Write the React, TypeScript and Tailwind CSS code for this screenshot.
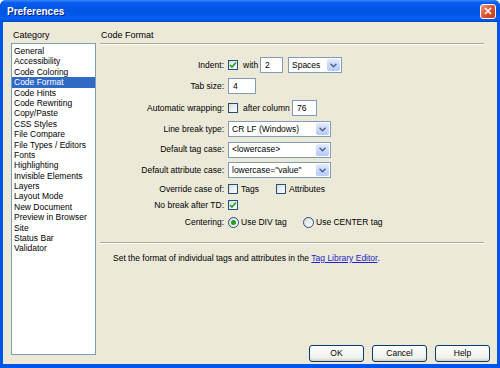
import React from "react";

const categories = [
  "General",
  "Accessibility",
  "Code Coloring",
  "Code Format",
  "Code Hints",
  "Code Rewriting",
  "Copy/Paste",
  "CSS Styles",
  "File Compare",
  "File Types / Editors",
  "Fonts",
  "Highlighting",
  "Invisible Elements",
  "Layers",
  "Layout Mode",
  "New Document",
  "Preview in Browser",
  "Site",
  "Status Bar",
  "Validator",
];

function Check({ on }: { on?: boolean }) {
  return (
    <span className="flex h-[10px] w-[10px] shrink-0 items-center justify-center border border-[#1C5180] bg-[linear-gradient(135deg,#DCDCD7,#FFFFFF)]">
      {on && (
        <svg width="8" height="8" viewBox="0 0 8 8">
          <path d="M1 4 L3 6 L7 1.5" fill="none" stroke="#21A121" strokeWidth="1.6" />
        </svg>
      )}
    </span>
  );
}

function Radio({ on }: { on?: boolean }) {
  return (
    <span className="flex h-[11px] w-[11px] shrink-0 items-center justify-center rounded-full border border-[#1C5180] bg-[linear-gradient(135deg,#DCDCD7,#FFFFFF)]">
      {on && <span className="h-[5px] w-[5px] rounded-full bg-[#21A121]" />}
    </span>
  );
}

function Field({ value, w }: { value: string; w: string }) {
  return (
    <span className={`flex h-[16px] items-center border border-[#7F9DB9] bg-white pl-[4px] ${w}`}>{value}</span>
  );
}

function Select({ value, w }: { value: string; w: string }) {
  return (
    <span className={`flex h-[16px] items-center border border-[#7F9DB9] bg-white pl-[3px] ${w}`}>
      <span className="flex-1 whitespace-nowrap">{value}</span>
      <span className="m-px flex h-[12px] w-[13px] items-center justify-center rounded-[2px] bg-[linear-gradient(180deg,#E2EBFE,#B6CAF9)]">
        <svg width="7" height="5" viewBox="0 0 7 5">
          <path d="M0.5 0.8 L3.5 3.8 L6.5 0.8" fill="none" stroke="#4D6185" strokeWidth="1.5" />
        </svg>
      </span>
    </span>
  );
}

function Row({ label, h, children }: { label: string; h: string; children: React.ReactNode }) {
  return (
    <div className={`grid grid-cols-[124px_1fr] items-center gap-x-[4px] ${h}`}>
      <span className="text-right whitespace-nowrap">{label}</span>
      <div className="flex items-center">{children}</div>
    </div>
  );
}

function Button({ label }: { label: string }) {
  return (
    <button className="flex h-[17px] w-[55px] items-center justify-center rounded-[3px] border border-[#003C74] bg-[linear-gradient(180deg,#FFFFFF,#F0F0EA_80%,#D6D0C5)] text-black">
      {label}
    </button>
  );
}

export default function App() {
  return (
    <div className="flex h-[368px] w-[500px] flex-col overflow-hidden rounded-t-[6px] bg-[#0055EA] font-['Liberation_Sans',Arial,sans-serif] text-[8.5px] text-black">
      <div className="flex h-[22px] items-center justify-between bg-[linear-gradient(180deg,#3A8CFF_0%,#0A5DF0_12%,#0054E3_50%,#0061F5_85%,#0046C8_100%)] pl-[7px] pr-[4px]">
        <span className="text-[10px] font-bold text-white [text-shadow:1px_1px_#0A1E80]">Preferences</span>
        <span className="flex h-[15px] w-[16px] items-center justify-center rounded-[3px] border border-white bg-[linear-gradient(135deg,#F09A7C,#E0522E_50%,#C23A12)]">
          <svg width="8" height="8" viewBox="0 0 8 8">
            <path d="M1 1 L7 7 M7 1 L1 7" stroke="#FFFFFF" strokeWidth="1.7" />
          </svg>
        </span>
      </div>

      <div className="mx-[3px] mb-[4px] flex flex-1 bg-[#ECE9D8] pl-[8px]">
        <div className="flex w-[85px] flex-col pt-[7px] pb-[9px]">
          <div className="h-[14px] pl-[2px] text-[9px] leading-[12px]">Category</div>
          <div className="flex-1 border border-[#7F9DB9] bg-white pt-[2px]">
            {categories.map((c, i) => (
              <div
                key={c}
                className={`h-[10.4px] pl-[2px] leading-[10.4px] whitespace-nowrap ${i === 3 ? "bg-[#316AC5] text-white" : ""}`}
              >
                {c}
              </div>
            ))}
          </div>
        </div>

        <div className="ml-[4px] flex flex-1 flex-col pr-[7px] pt-[7px]">
          <div className="h-[14px] pl-[1px] text-[9px] leading-[12px]">Code Format</div>
          <div className="mr-[6px] border-t border-b border-t-[#ACA899] border-b-white" />

          <div className="mt-[10px] flex flex-col">
            <Row label="Indent:" h="h-[20px]">
              <Check on />
              <span className="ml-[5px] w-[17px]">with</span>
              <Field value="2" w="w-[23px]" />
              <span className="ml-[5px]">
                <Select value="Spaces" w="w-[54px]" />
              </span>
            </Row>
            <Row label="Tab size:" h="h-[22px]">
              <Field value="4" w="w-[28px]" />
            </Row>
            <Row label="Automatic wrapping:" h="h-[22px]">
              <Check />
              <span className="ml-[5px] w-[46px] whitespace-nowrap">after column</span>
              <span className="ml-[3px]">
                <Field value="76" w="w-[25px]" />
              </span>
            </Row>
            <Row label="Line break type:" h="h-[20px]">
              <Select value="CR LF (Windows)" w="w-[103px]" />
            </Row>
            <Row label="Default tag case:" h="h-[21px]">
              <Select value="<lowercase>" w="w-[103px]" />
            </Row>
            <Row label="Default attribute case:" h="h-[20px]">
              <Select value='lowercase="value"' w="w-[103px]" />
            </Row>
            <Row label="Override case of:" h="h-[18px]">
              <Check />
              <span className="ml-[3px] w-[35px]">Tags</span>
              <Check />
              <span className="ml-[3px]">Attributes</span>
            </Row>
            <Row label="No break after TD:" h="h-[14px]">
              <Check on />
            </Row>
            <Row label="Centering:" h="h-[20px]">
              <Radio on />
              <span className="ml-[2px] w-[62px]">Use DIV tag</span>
              <Radio />
              <span className="ml-[2px]">Use CENTER tag</span>
            </Row>
          </div>

          <div className="mt-[10px] mr-[6px] border-t border-b border-t-[#ACA899] border-b-white" />
          <p className="mt-[8px] pl-[13px]">
            Set the format of individual tags and attributes in the{" "}
            <span className="text-[#2222CC] underline">Tag Library Editor</span>.
          </p>

          <div className="mt-auto mb-[2px] flex justify-end gap-[8px]">
            <Button label="OK" />
            <Button label="Cancel" />
            <Button label="Help" />
          </div>
        </div>
      </div>
    </div>
  );
}
